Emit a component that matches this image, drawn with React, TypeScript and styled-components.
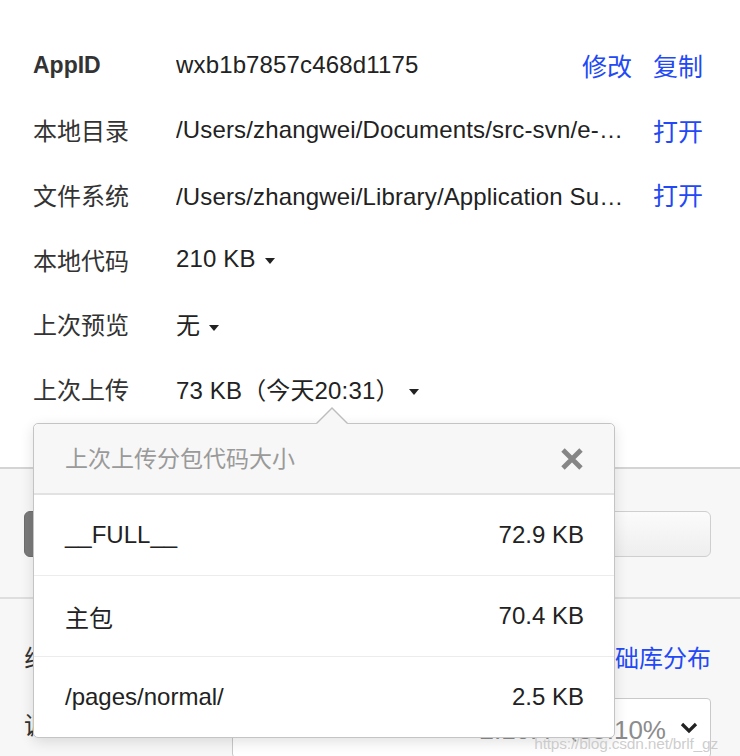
import styled, { createGlobalStyle } from 'styled-components';

const GlobalStyle = createGlobalStyle`
  html, body {
    margin: 0;
    padding: 0;
    background: #ffffff;
  }

  body {
    font-family: "Liberation Sans", "Noto Sans CJK SC", sans-serif;
    color: #222222;
  }
`;

const Page = styled.div`
  position: relative;
  width: 740px;
  height: 756px;
  overflow: hidden;
  background: #f7f7f7;
`;

const InfoSection = styled.div`
  position: relative;
  background: #ffffff;
  padding: 33px 37px 46px 33px;
  border-bottom: 2px solid #d4d4d4;
`;

const Row = styled.div`
  display: flex;
  align-items: center;
  height: 64.6px;
  font-size: 24px;
`;

const Label = styled.div<{ $bold?: boolean }>`
  width: 143px;
  flex-shrink: 0;
  color: #333333;
  font-weight: ${(p) => (p.$bold ? 700 : 400)};
  font-size: ${(p) => (p.$bold ? '23px' : '24px')};
`;

const Value = styled.div`
  flex: 1;
  min-width: 0;
  margin-right: 24px;
  white-space: nowrap;
  overflow: hidden;
  text-overflow: ellipsis;
  color: #222222;
  letter-spacing: 0.15px;
`;

const Actions = styled.div`
  display: flex;
  flex-shrink: 0;
  gap: 21px;
`;

const Link = styled.a<{ $size?: number }>`
  color: #2249f5;
  text-decoration: none;
  cursor: pointer;
  font-size: ${(p) => p.$size ?? 25}px;
`;

const Caret = styled.span`
  display: inline-block;
  vertical-align: middle;
  width: 0;
  height: 0;
  margin-left: 9px;
  border-left: 5px solid transparent;
  border-right: 5px solid transparent;
  border-top: 6px solid #222222;
`;

const Popover = styled.div`
  position: absolute;
  left: 33px;
  top: 423px;
  width: 580px;
  background: #ffffff;
  border: 1px solid #c4c4c4;
  border-radius: 5px;
  box-shadow: 0 4px 14px rgba(0, 0, 0, 0.12);
  z-index: 10;

  &::before {
    content: '';
    position: absolute;
    left: 282px;
    top: -17px;
    border-left: 16px solid transparent;
    border-right: 16px solid transparent;
    border-bottom: 16px solid #bdbdbd;
  }

  &::after {
    content: '';
    position: absolute;
    left: 283px;
    top: -15px;
    border-left: 15px solid transparent;
    border-right: 15px solid transparent;
    border-bottom: 15px solid #f7f7f7;
  }
`;

const PopHeader = styled.div`
  display: flex;
  align-items: center;
  justify-content: space-between;
  height: 69px;
  padding: 0 30px 0 31px;
  background: #f7f7f7;
  border-bottom: 2px solid #e2e2e2;
  border-radius: 5px 5px 0 0;
  font-size: 23px;
  color: #9a9a9a;

  & > span {
    margin-top: -4px;
  }
`;

const CloseButton = styled.button`
  border: none;
  background: none;
  padding: 0;
  width: 24px;
  height: 24px;
  display: flex;
  align-items: center;
  justify-content: center;
  cursor: pointer;
`;

const PopRow = styled.div`
  display: flex;
  align-items: center;
  justify-content: space-between;
  height: 80px;
  padding: 0 30px 0 31px;
  font-size: 24px;
  color: #222222;

  & + & {
    border-top: 1px solid #ececec;
  }
`;

const Toolbar = styled.div`
  display: flex;
  gap: 12px;
  padding: 42px 29px 40px 24px;
  border-bottom: 2px solid #dedede;
`;

const Button = styled.div<{ $primary?: boolean }>`
  flex: 1;
  height: 46px;
  border-radius: 6px;
  box-sizing: border-box;
  border: 1px solid ${(p) => (p.$primary ? '#6e6e6e' : '#cfcfcf')};
  background: ${(p) =>
    p.$primary ? '#7a7a7a' : 'linear-gradient(#fbfbfb, #eeeeee)'};
`;

const StatsSection = styled.div`
  padding: 35px 29px 0 24px;
  font-size: 24px;
`;

const StatsHead = styled.div`
  display: flex;
  justify-content: space-between;
  align-items: center;
  height: 46px;
  color: #333333;
`;

const SelectRow = styled.div`
  display: flex;
  align-items: center;
  margin-top: 18px;
  color: #333333;
`;

const SelectLabel = styled.div`
  width: 208px;
  padding-bottom: 8px;
`;

const SelectBox = styled.div`
  flex: 1;
  display: flex;
  align-items: center;
  justify-content: flex-end;
  gap: 14px;
  height: 58px;
  padding: 0 12px 0 16px;
  border: 1px solid #c9c9c9;
  border-radius: 4px;
  background: #ffffff;
  color: #8c8c8c;
  font-size: 26px;
`;

const Watermark = styled.div`
  position: absolute;
  right: 22px;
  bottom: 3px;
  font-size: 15.5px;
  color: rgba(196, 196, 196, 0.85);
  letter-spacing: -0.2px;
  z-index: 20;
`;

export default function App() {
  return (
    <Page>
      <GlobalStyle />
      <InfoSection>
        <Row>
          <Label $bold>AppID</Label>
          <Value>wxb1b7857c468d1175</Value>
          <Actions>
            <Link>修改</Link>
            <Link>复制</Link>
          </Actions>
        </Row>
        <Row>
          <Label>本地目录</Label>
          <Value>/Users/zhangwei/Documents/src-svn/e-commerce/miniprogram</Value>
          <Actions>
            <Link>打开</Link>
          </Actions>
        </Row>
        <Row>
          <Label>文件系统</Label>
          <Value>/Users/zhangwei/Library/Application Support/微信开发者工具</Value>
          <Actions>
            <Link>打开</Link>
          </Actions>
        </Row>
        <Row>
          <Label>本地代码</Label>
          <Value>
            210 KB<Caret />
          </Value>
        </Row>
        <Row>
          <Label>上次预览</Label>
          <Value>
            无<Caret />
          </Value>
        </Row>
        <Row>
          <Label>上次上传</Label>
          <Value>
            73 KB（今天20:31）<Caret />
          </Value>
        </Row>

        <Popover>
          <PopHeader>
            <span>上次上传分包代码大小</span>
            <CloseButton aria-label="关闭">
              <svg width="24" height="24" viewBox="0 0 24 24">
                <path d="M3 3 L21 21 M21 3 L3 21" stroke="#868686" strokeWidth="4.8" />
              </svg>
            </CloseButton>
          </PopHeader>
          <PopRow>
            <span>__FULL__</span>
            <span>72.9 KB</span>
          </PopRow>
          <PopRow>
            <span>主包</span>
            <span>70.4 KB</span>
          </PopRow>
          <PopRow>
            <span>/pages/normal/</span>
            <span>2.5 KB</span>
          </PopRow>
        </Popover>
      </InfoSection>

      <Toolbar>
        <Button $primary />
        <Button />
      </Toolbar>

      <StatsSection>
        <StatsHead>
          <span>线上版本</span>
          <Link $size={24}>基础库分布</Link>
        </StatsHead>
        <SelectRow>
          <SelectLabel>调试基础库</SelectLabel>
          <SelectBox>
            <span>2.10.4（35.10%</span>
            <svg width="18" height="12" viewBox="0 0 18 12">
              <path d="M2 2 L9 9 L16 2" fill="none" stroke="#222222" strokeWidth="3.2" />
            </svg>
          </SelectBox>
        </SelectRow>
      </StatsSection>

      <Watermark>https://blog.csdn.net/brlf_gz</Watermark>
    </Page>
  );
}
